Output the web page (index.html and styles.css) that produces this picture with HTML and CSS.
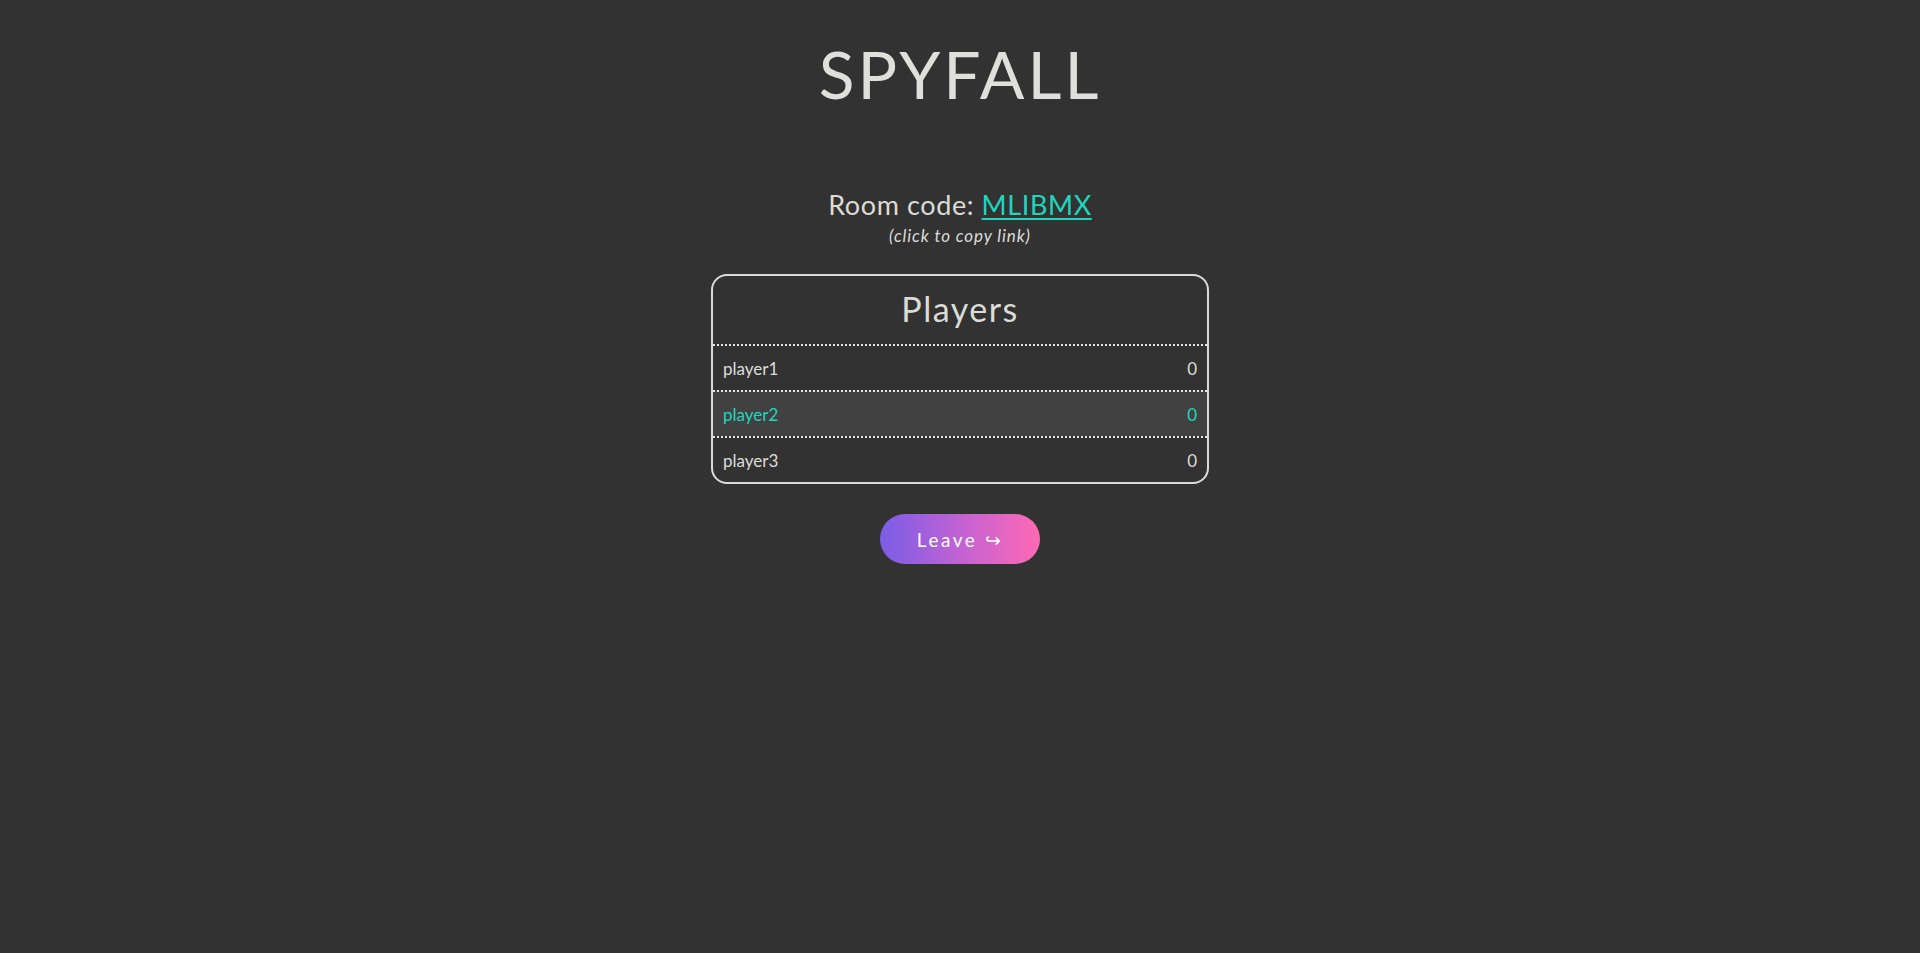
FILE: index.html
```html
<!DOCTYPE html>
<html lang="en">
<head>
<meta charset="utf-8">
<title>Spyfall</title>
<link rel="stylesheet" href="styles.css">
</head>
<body>
<main class="page">
  <h1 class="title">SPYFALL</h1>
  <div class="room">
    <div class="room-line">Room code: <a class="code" href="#">MLIBMX</a></div>
    <div class="hint">(click to copy link)</div>
  </div>
  <section class="panel">
    <h2 class="panel-title">Players</h2>
    <ul class="players">
      <li class="row"><span>player1</span><span>0</span></li>
      <li class="row me"><span>player2</span><span>0</span></li>
      <li class="row"><span>player3</span><span>0</span></li>
    </ul>
  </section>
  <button class="leave">Leave ↪</button>
</main>
</body>
</html>
```
FILE: styles.css
```css
html, body {
  margin: 0;
  padding: 0;
  background: #323232;
  color: #dcdcd7;
  font-family: "Lato", "Noto Sans", sans-serif;
}
.page {
  display: flex;
  flex-direction: column;
  align-items: center;
}
.title {
  margin: 34px 0 0;
  font-size: 66px;
  font-weight: 400;
  line-height: 80px;
  letter-spacing: 3px;
  color: #dfdfdb;
}
.room {
  margin-top: 75px;
  display: flex;
  flex-direction: column;
  align-items: center;
}
.room-line {
  font-size: 27px;
  line-height: 32px;
  letter-spacing: 0.6px;
}
.code {
  color: #1fd6bd;
  text-decoration: underline;
  text-underline-offset: 3px;
}
.hint {
  font-size: 17px;
  font-style: italic;
  line-height: 20px;
  letter-spacing: 0.9px;
  margin-top: 5px;
}
.panel {
  box-sizing: border-box;
  width: 498px;
  margin-top: 28px;
  border: 2px solid #dcdcd7;
  border-radius: 16px;
  overflow: hidden;
}
.panel-title {
  margin: 0;
  height: 68px;
  padding-bottom: 3px;
  box-sizing: border-box;
  display: flex;
  align-items: center;
  justify-content: center;
  font-size: 34px;
  font-weight: 400;
  letter-spacing: 1.5px;
}
.players {
  list-style: none;
  margin: 0;
  padding: 0;
}
.row {
  box-sizing: border-box;
  height: 46px;
  border-top: 2px dotted #e6e6e6;
  display: flex;
  align-items: center;
  justify-content: space-between;
  padding: 0 10px;
  font-size: 17px;
}
.row.me {
  background: #414141;
  color: #1fd6bd;
}
.leave {
  margin-top: 30px;
  width: 160px;
  height: 50px;
  border: none;
  border-radius: 25px;
  background: linear-gradient(90deg, #7a5de6 0%, #c262d4 50%, #ff69b4 100%);
  color: #ffffff;
  font-family: inherit;
  font-size: 19px;
  letter-spacing: 2.5px;
  cursor: pointer;
}
```
